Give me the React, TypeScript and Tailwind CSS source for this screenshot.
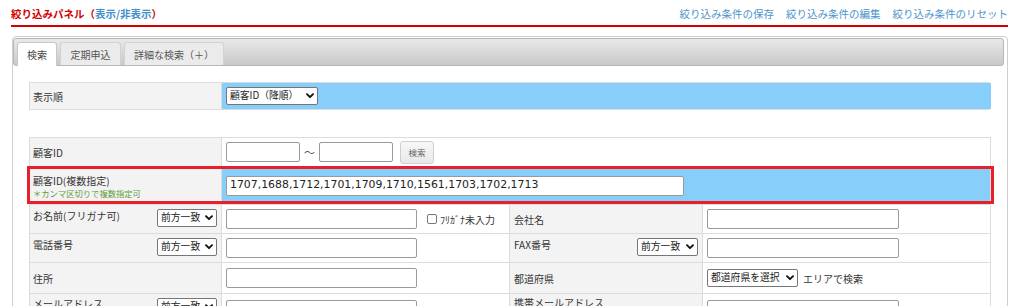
import React from "react";

function Sel({ className, children }: { className: string; children: React.ReactNode }) {
  return (
    <div
      className={
        "flex h-[18px] shrink-0 items-center justify-between rounded-[2px] border border-[#767676] bg-white pl-[3px] pr-[3px] text-[9.8px] leading-none text-[#222] " +
        className
      }
    >
      <span className="whitespace-nowrap">{children}</span>
      <svg width="8" height="6" viewBox="0 0 8 6" className="shrink-0">
        <path d="M1 1.2l3 3 3-3" stroke="#111" strokeWidth="1.9" fill="none" strokeLinecap="round" strokeLinejoin="round" />
      </svg>
    </div>
  );
}

function Inp({ className, children }: { className: string; children?: React.ReactNode }) {
  return (
    <div
      className={
        "flex h-[20px] shrink-0 items-center rounded-[2px] border border-[#9a9a9a] bg-white " + className
      }
    >
      {children}
    </div>
  );
}

export default function App() {
  return (
    <div className="h-[306px] w-[1024px] overflow-hidden bg-white font-['Noto_Sans_CJK_JP',sans-serif] text-[10px] text-[#333]">
      {/* header */}
      <div className="ml-[11px] w-[997px]">
        <div className="flex h-[25px] items-center justify-between pt-[2px]">
          <div className="text-[10.5px] font-bold leading-[14px]">
            <span className="text-[#d40000]">絞り込みパネル（</span>
            <span className="text-[#3d8fcc]">表示/非表示</span>
            <span className="text-[#d40000]">）</span>
          </div>
          <div className="flex gap-[12px] text-[10.5px] leading-[14px] text-[#4a95c9]">
            <span>絞り込み条件の保存</span>
            <span>絞り込み条件の編集</span>
            <span>絞り込み条件のリセット</span>
          </div>
        </div>
        <div className="h-[2px] bg-[#d40000]" />
      </div>

      {/* panel */}
      <div className="ml-[12px] mt-[9px] h-[300px] w-[996px] rounded-t-[4px] border border-[#cfcfcf]">
        {/* tab bar */}
        <div className="mt-[1px] flex h-[28px] w-[991px] items-end gap-[3px] rounded-[3px] border border-[#b8b8b8] bg-gradient-to-b from-[#e9e9e9] to-[#c9c9c9] pl-[3px]">
          <div className="-mb-[1px] flex h-[24px] w-[40px] items-center justify-center rounded-t-[3px] border border-b-0 border-[#c8c8c8] bg-white text-[#444]">
            検索
          </div>
          <div className="flex h-[23px] w-[61px] items-center justify-center rounded-t-[3px] border border-b-0 border-[#d2d2d2] bg-[#ebebeb] text-[#555]">
            定期申込
          </div>
          <div className="flex h-[23px] w-[100px] items-center justify-center rounded-t-[3px] border border-b-0 border-[#d2d2d2] bg-[#ebebeb] text-[#555]">
            詳細な検索（＋）
          </div>
        </div>

        {/* table 1 */}
        <div className="ml-[16px] mt-[16px] grid h-[28px] w-[961px] grid-cols-[192px_769px] border border-[#dcdcdc]">
          <div className="flex items-center border-r border-[#dcdcdc] bg-[#f3f3f3] pl-[3px] leading-[13px]">表示順</div>
          <div className="flex items-center bg-[#87cefa] pl-[4px]">
            <Sel className="w-[92px]">顧客ID（降順）</Sel>
          </div>
        </div>

        {/* table 2 */}
        <div className="ml-[16px] mt-[27px] w-[962px] border-l border-t border-[#dcdcdc]">
          {/* row 1 */}
          <div className="grid h-[29px] grid-cols-[192px_769px] border-b border-[#dcdcdc]">
            <div className="flex items-center border-r border-[#dcdcdc] bg-[#f3f3f3] pl-[3px] leading-[13px]">顧客ID</div>
            <div className="flex items-center border-r border-[#dcdcdc] pl-[4px]">
              <Inp className="w-[74px]" />
              <span className="mx-[4px] text-[11px] text-[#555]">～</span>
              <Inp className="w-[74px]" />
              <div className="ml-[7px] flex h-[23px] w-[34px] items-center justify-center rounded-[3px] border border-[#cfcfcf] bg-gradient-to-b from-[#f7f7f7] to-[#e9e9e9] text-[8.5px] text-[#666]">
                検索
              </div>
            </div>
          </div>

          {/* row 2 (highlighted) */}
          <div className="relative grid h-[38px] grid-cols-[192px_769px] border-b border-[#dcdcdc]">
            <div className="border-r border-[#dcdcdc] bg-[#f3f3f3] pl-[3px] pt-[7px]">
              <div className="leading-[13px]">顧客ID(複数指定)</div>
              <div className="text-[8.3px] leading-[12px] text-[#5e9c3a]">＊カンマ区切りで複数指定可</div>
            </div>
            <div className="flex items-center border-r border-[#dcdcdc] bg-[#87cefa] pl-[4px]">
              <Inp className="w-[458px] pl-[3px] font-['DejaVu_Sans',sans-serif] text-[10.9px] text-[#222]">
                1707,1688,1712,1701,1709,1710,1561,1703,1702,1713
              </Inp>
            </div>
            <div className="pointer-events-none absolute -left-[3px] -right-[3px] -top-[1px] bottom-0 border-[3px] border-[#e8202a]" />
          </div>

          {/* row 3 */}
          <div className="grid h-[29px] grid-cols-[192px_288px_193px_288px] border-b border-[#dcdcdc]">
            <div className="flex items-start justify-between border-r border-[#dcdcdc] bg-[#f3f3f3] pl-[3px] pr-[4px] pt-[4px]">
              <span className="leading-[13px]">お名前(フリガナ可)</span>
              <Sel className="w-[60px]">前方一致</Sel>
            </div>
            <div className="flex items-center border-r border-[#dcdcdc] pl-[4px]">
              <Inp className="w-[191px]" />
              <span className="ml-[10px] h-[10px] w-[10px] rounded-[2px] border border-[#777] bg-white" />
              <span className="ml-[3px] leading-[13px]">ﾌﾘｶﾞﾅ未入力</span>
            </div>
            <div className="flex items-center border-r border-[#dcdcdc] bg-[#f3f3f3] pl-[4px] leading-[13px]">会社名</div>
            <div className="flex items-center border-r border-[#dcdcdc] pl-[4px]">
              <Inp className="w-[192px]" />
            </div>
          </div>

          {/* row 4 */}
          <div className="grid h-[29px] grid-cols-[192px_288px_193px_288px] border-b border-[#dcdcdc]">
            <div className="flex items-start justify-between border-r border-[#dcdcdc] bg-[#f3f3f3] pl-[3px] pr-[4px] pt-[4px]">
              <span className="leading-[13px]">電話番号</span>
              <Sel className="w-[60px]">前方一致</Sel>
            </div>
            <div className="flex items-center border-r border-[#dcdcdc] pl-[4px]">
              <Inp className="w-[191px]" />
            </div>
            <div className="flex items-start justify-between border-r border-[#dcdcdc] bg-[#f3f3f3] pl-[4px] pr-[4px] pt-[4px]">
              <span className="leading-[13px]">FAX番号</span>
              <Sel className="w-[61px]">前方一致</Sel>
            </div>
            <div className="flex items-center border-r border-[#dcdcdc] pl-[4px]">
              <Inp className="w-[192px]" />
            </div>
          </div>

          {/* row 5 */}
          <div className="grid h-[31px] grid-cols-[192px_288px_193px_288px] border-b border-[#dcdcdc]">
            <div className="flex items-center border-r border-[#dcdcdc] bg-[#f3f3f3] pl-[3px] leading-[13px]">住所</div>
            <div className="flex items-center border-r border-[#dcdcdc] pl-[4px]">
              <Inp className="w-[191px]" />
            </div>
            <div className="flex items-center border-r border-[#dcdcdc] bg-[#f3f3f3] pl-[4px] leading-[13px]">都道府県</div>
            <div className="flex items-center border-r border-[#dcdcdc] pl-[4px]">
              <Sel className="w-[91px]">都道府県を選択</Sel>
              <span className="ml-[5px] leading-[13px]">エリアで検索</span>
            </div>
          </div>

          {/* row 6 */}
          <div className="grid h-[29px] grid-cols-[192px_288px_193px_288px] border-b border-[#dcdcdc]">
            <div className="flex items-start justify-between border-r border-[#dcdcdc] bg-[#f3f3f3] pl-[3px] pr-[4px] pt-[3px]">
              <span className="leading-[13px]">メールアドレス</span>
              <Sel className="mt-[1px] w-[60px]">前方一致</Sel>
            </div>
            <div className="flex items-start border-r border-[#dcdcdc] pl-[4px] pt-[6px]">
              <Inp className="w-[191px]" />
            </div>
            <div className="flex items-start border-r border-[#dcdcdc] bg-[#f3f3f3] pl-[4px] pt-[2px]">
              <span className="leading-[13px]">携帯メールアドレス</span>
            </div>
            <div className="flex items-start border-r border-[#dcdcdc] pl-[4px] pt-[6px]">
              <Inp className="w-[192px]" />
            </div>
          </div>
        </div>
      </div>
    </div>
  );
}
